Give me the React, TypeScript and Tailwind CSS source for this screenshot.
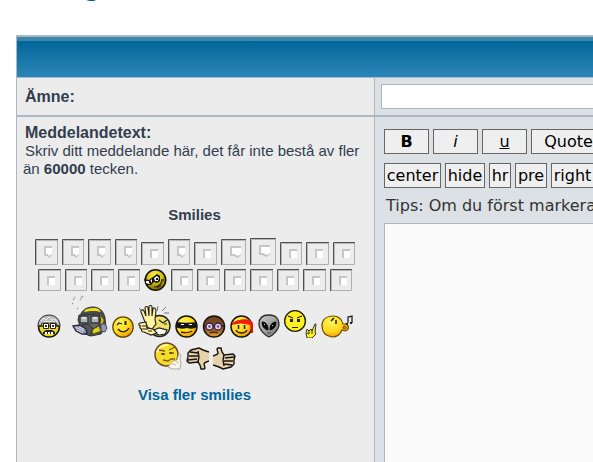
import React from 'react';

interface Smiley {
  width: number;
  height: number;
  label: string;
  art?: React.ReactNode;
}

const missing = (width: number, height: number): Smiley => ({ width, height, label: '' });

const Face = ({ x = 11.5, y = 11.5, r = 10.5, fill = 'url(#sun)' }: { x?: number; y?: number; r?: number; fill?: string }) => (
  <circle cx={x} cy={y} r={r} fill={fill} stroke="#16140a" strokeWidth="1.5" />
);

const sly: Smiley = {
  width: 23,
  height: 22,
  label: 'Sly',
  art: (
    <>
      <circle cx="11.5" cy="11" r="10.2" fill="url(#olive)" stroke="#16140a" strokeWidth="1.6" />
      <path d="M0 10 5 11 9 8 13 5 16 7 16 12 13 14 10 13 7 16 2 16Z" fill="#16140a" />
      <path d="M2 12 6 12 8 10 8 13 5 15 2 14ZM10 9 13 7 15 9 14 12 11 12Z" fill="#fff" />
      <path d="M12 9h2v2h-2zM5 12h2v2H5z" fill="#16140a" />
      <path d="M10 18c4 0 8-3 8-7M17 11l3 0M13 19l4-3" fill="none" stroke="#3b3200" strokeWidth="1.3" />
    </>
  ),
};

const grandpa: Smiley = {
  width: 24,
  height: 25,
  label: 'Grandpa',
  art: (
    <>
      <Face x={12} y={13.5} r={10.5} fill="#f0d81c" />
      <path d="M1 13C1 6 6 2 12 2s11 4 11 11l-3 0-1-3H5l-1 3Z" fill="#b9bbbd" stroke="#333" />
      <path d="M4 8l3-3 2 2 3-3 3 3 3-1 2 3M6 9l3-1 3 1 3-1 3 1" fill="none" stroke="#eee" />
      <path d="M2 13h20" stroke="#222" strokeWidth="1.4" />
      <path d="M6.5 10.5h5v5h-5zM13.500 10.500h5v5h-5z" fill="#fff" stroke="#222" />
      <path d="M8 12h2v2H8zM15 12h2v2h-2z" fill="#333" />
      <path d="M6 21v-2l3-2h6l3 2v2Z" fill="#222" />
      <path d="M8 19h2v2H8zM11 19h2v2h-2zM14 19h2v2h-2z" fill="#fff" />
    </>
  ),
};

const gasMask: Smiley = {
  width: 43,
  height: 43,
  label: 'Gas mask',
  art: (
    <>
      <path d="M8 4h1v1H8zM9 2h1v1H9zM15 4h1v1h-1zM17 1h1v1h-1zM16 2h1v1h-1zM7 8h1v1H7zM12 13h1v1h-1z" fill="#777" stroke="#aaa" strokeWidth=".5" />
      <path d="M15 22c1-7 7-10 13-10 7 0 11 5 12 11l1 9-5 7-10 2-9-5Z" fill="#4b4c4e" stroke="#333" />
      <path d="M19 16c3-3 7-3 11-3 3 0 5 2 6 4l-5-1-6 0-5 1Z" fill="#eee012" />
      <path d="M35 20l4 5-2 6-2-3ZM26 34l6-6 4 8-8 3Z" fill="#ddd016" stroke="#57530a" strokeWidth=".7" />
      <path d="M14 20l20-1 2 7-4 6-7 3-10-4-2-6Z" fill="#67696b" stroke="#333" />
      <path d="M15 21h8v7h-8zM26 21h8v7h-8z" fill="#aeb3b4" stroke="#36383a" strokeWidth="1.4" />
      <path d="M17 22h4v2h-4zM28 22h4v2h-4z" fill="#e0e3e3" />
      <path d="M17 30l7-1 4 5-3 7-7-3Z" fill="#535558" stroke="#303134" />
      <path d="M8 31l7-1 6 4 1 5-5 0-6-3Z" fill="#9297b4" stroke="#292a3e" strokeWidth="1.3" />
      <path d="M10 32l9 4M12 35l6 3M14 32l5 2" stroke="#d4d7ea" />
      <path d="M36 29l4 0 2 4-2 4-4-1Z" fill="#9297b4" stroke="#4a4b60" />
    </>
  ),
};

const wink: Smiley = {
  width: 22,
  height: 23,
  label: 'Wink',
  art: (
    <>
      <circle cx="11" cy="12" r="10.2" fill="url(#sun)" stroke="#5b4300" strokeWidth="1.2" />
      <path d="M13.500 6v4" stroke="#222" strokeWidth="2" />
      <path d="M5 10l2-2 3 1M6 14c3 4 8 4 11-1" fill="none" stroke="#222" strokeWidth="1.3" />
    </>
  ),
};

const applause: Smiley = {
  width: 33,
  height: 33,
  label: 'Applause',
  art: (
    <>
      <path d="M1 3l3 3M20 1l-1 5M28 2l-4 4M31 8h-5" stroke="#777" />
      <circle cx="21.500" cy="21" r="10.500" fill="#efe069" stroke="#222" strokeWidth="1.4" />
      <path d="M16 25l5-2 8 2-2 4-6 1-5-2Z" fill="#fff" stroke="#222" strokeWidth="1.2" />
      <path d="M21 15l4 3M29 15l-4 3M26 19h3" stroke="#222" strokeWidth="1.1" />
      <path d="M7 17 3 7c-1-2 2-3 3-1l2 5L7 3c0-2 3-2 3 0l1 8V2c0-2 3-2 3 0v9l1-7c0-2 3-1 3 1l-1 10 1 4-4 5-6-2Z" fill="#fff2a0" stroke="#222" strokeWidth="1.1" />
      <path d="M8 17 2 18c-2 1-1 3 1 3-2 1-1 3 1 3-1 2 0 3 2 3l7 3 6-2-4-4-6-1Z" fill="#fff2a0" stroke="#222" strokeWidth="1.2" />
      <path d="M4 21h6M5 24h5M10 26l4 0" stroke="#222" />
    </>
  ),
};

const bandit: Smiley = {
  width: 23,
  height: 23,
  label: 'Bandit',
  art: (
    <>
      <Face />
      <path d="M1 7c7 1 14 1 21 0v5c-3 2-7 2-10 1-4 1-8 1-11-1Z" fill="#171717" />
      <path d="M6 9h3v1H6zM14 9h3v1h-3z" fill="#fff" />
      <path d="M6 17c4 1 8 1 11-1" fill="none" stroke="#3a2500" strokeWidth="1.4" />
    </>
  ),
};

const goggles: Smiley = {
  width: 24,
  height: 23,
  label: 'Goggles',
  art: (
    <>
      <Face x={12} fill="url(#brown)" />
      <path d="M2 11h20" stroke="#302018" strokeWidth="1.5" />
      <circle cx="7.500" cy="11.500" r="3.500" fill="#e1d5ee" stroke="#392442" strokeWidth="1.3" />
      <circle cx="16" cy="11.500" r="3.500" fill="#e1d5ee" stroke="#392442" strokeWidth="1.3" />
      <circle cx="7.500" cy="11.500" r="1.300" fill="#6c4c82" />
      <circle cx="16" cy="11.500" r="1.300" fill="#6c4c82" />
      <path d="M8 18c2-1 6-1 8 0" fill="none" stroke="#33210c" strokeWidth="1.3" />
    </>
  ),
};

const bandana: Smiley = {
  width: 24,
  height: 23,
  label: 'Bandana',
  art: (
    <>
      <Face />
      <path d="M2 8c4-3 13-5 18-3l3 3v10h-2l-1-8c-6-2-12-2-18 0Z" fill="#ef1c10" />
      <path d="M22 11v6" stroke="#a80d08" />
      <path d="M8.500 10v4M14.500 10v4" stroke="#3a2100" strokeWidth="1.6" />
      <path d="M6 15c2 4 9 4 11 0" fill="none" stroke="#3a2100" strokeWidth="1.4" />
    </>
  ),
};

const alien: Smiley = {
  width: 22,
  height: 25,
  label: 'Alien',
  art: (
    <>
      <path d="M11 2c7 0 10 4 10 9 0 6-7 12-10 13C8 23 1 17 1 11c0-5 3-9 10-9Z" fill="url(#steel)" stroke="#292929" strokeWidth="1.3" />
      <path d="M4 9c4 0 6 3 6 8-4-1-6-4-6-8ZM18 9c-4 0-6 3-6 8 4-1 6-4 6-8Z" fill="#080808" stroke="#080808" />
      <path d="M6 11h1v1H6zM14 12h1v1h-1z" fill="#ccc" />
      <path d="M9 20h4" stroke="#444" />
    </>
  ),
};

const angry: Smiley = {
  width: 33,
  height: 28,
  label: 'Angry',
  art: (
    <>
      <circle cx="11" cy="11" r="10.400" fill="#fff21d" stroke="#26240a" strokeWidth="1.400" />
      <path d="M4 6l5 2M18 6l-5 2" stroke="#222" strokeWidth="1.200" />
      <path d="M6 9h3v3H6zM13 9h3v3h-3zM8 17h6v1H8z" fill="#222" />
      <path d="M23 28l-1-5 1-4 2 2 2-2 1 2 3-7 1 0-1 8 1 2-4 4Z" fill="#fff21d" stroke="#333" />
      <path d="M25 21l0 3M28 21l0 3M23 23l2 1" stroke="#333" />
    </>
  ),
};

const whistle: Smiley = {
  width: 32,
  height: 24,
  label: 'Whistle',
  art: (
    <>
      <path d="M12 2c6 0 9 4 10 8l2 0c4-1 5 7 0 7l-3-1c-2 5-5 7-10 7C5 22 1 18 1 12S5 2 12 2Z" fill="url(#sun)" stroke="#6b4c00" strokeWidth="1.2" />
      <path d="M10 7l3-3M15 6v4" stroke="#222" strokeWidth="1.500" />
      <circle cx="23.500" cy="13.500" r="1.500" fill="#d58a12" stroke="#7a4a00" />
      <path d="M27 9V3l4-1v7" fill="none" stroke="#222" strokeWidth="1.3" />
      <path d="M25 9h2v2h-2zM29 8h2v2h-2z" fill="#222" />
    </>
  ),
};

const thinking: Smiley = {
  width: 28,
  height: 28,
  label: 'Thinking',
  art: (
    <>
      <circle cx="12.500" cy="12.500" r="11.500" fill="#f2df28" stroke="#6b4434" strokeWidth="1.500" />
      <path d="M3 10C5 5 9 3 14 3" fill="none" stroke="#fff79d" strokeWidth="2" />
      <path d="M5 8l6 1M15 8l6-3M7 12h4M15 11h5M9 18l5 1 3-2 4 0" fill="none" stroke="#8a541c" strokeWidth="1.3" />
      <path d="M8 11h2v2H8zM16 10h2v2h-2z" fill="#5c4610" />
      <path d="M14 25l5-6 4-1 2-6 2 1-1 5 1 2-1 7H18Z" fill="#f7f5ee" stroke="#b1ab98" />
      <path d="M18 22l4 1M22 20l3 1" stroke="#c6bdab" />
    </>
  ),
};

const Hand = () => (
  <>
    <path d="M0 9 4 8 5 6V1l3 0 1 4 2 3 9-1 2 2-2 5v4l-4 2-6 2-10-4Z" fill="#e6d2ab" />
    <path d="M0 9 4 7.500 5 6 4 2 5 1h3l1 4 2 3 9-1 2 2-1 4v4l-3 3-8 2-4-2-6-2" fill="none" stroke="#17130e" strokeWidth="1.400" />
    <path d="M11 8 10 13M12 11l9-1M11 14l9 0M11 17l8 1M10 13l1 6" fill="none" stroke="#17130e" strokeWidth="1.400" />
  </>
);

const thumbDown: Smiley = {
  width: 23,
  height: 23,
  label: 'Thumb down',
  art: (
    <g transform="rotate(180 11.5 11.5)">
      <Hand />
    </g>
  ),
};

const thumbUp: Smiley = { width: 23, height: 23, label: 'Thumb up', art: <Hand /> };

const firstRow: Smiley[] = [
  missing(23, 26), missing(22, 26), missing(23, 26), missing(22, 26), missing(23, 23), missing(22, 26),
  missing(23, 23), missing(25, 26), missing(26, 27), missing(22, 23), missing(23, 23), missing(22, 23),
];

const secondRow: Smiley[] = [
  missing(23, 22), missing(22, 22), missing(23, 22), missing(22, 22), sly, missing(22, 22),
  missing(23, 22), missing(22, 22), missing(23, 22), missing(22, 22), missing(23, 22), missing(22, 22),
];

const thirdRow = [grandpa, gasMask, wink, applause, bandit, goggles, bandana, alien, angry, whistle];
const fourthRow = [thinking, thumbDown, thumbUp];

// Inset frame with a clipped page icon, drawn for smilies without artwork
const MissingArt = ({ width, height }: Smiley) => {
  const wide = width > 23 ? 11 : 8;
  const tall = height > 23;
  return (
    <>
      <path d={`M${width - 0.5} 0V${height - 0.5}H0`} fill="none" stroke="#aeaeae" />
      <path d={`M.5 ${height}V.5H${width}`} fill="none" stroke="#505050" />
      <path d={`M1.5 ${height - 1}V1.5H${width - 1}`} fill="none" stroke="#b8b8b8" />
      <g transform="translate(9 7)">
        <path d={tall ? `M0 0H${wide}V9L${wide - 3} 12 3 10H0Z` : `M0 0H${wide}V9H0Z`} fill="#c6c6c6" />
        <path d={tall ? `M2 2H${wide}V8L${wide - 3} 10 4 8H2Z` : `M2 2H${wide}V9H2Z`} fill="#fff" />
      </g>
    </>
  );
};

const SmileyRow = ({ items }: { items: Smiley[] }) => (
  <div className="flex items-end justify-center gap-1">
    {items.map((item, i) => (
      <a key={i} href="#smilies" aria-label={item.label || 'Smiley'} className="shrink-0">
        <svg width={item.width} height={item.height} viewBox={`0 0 ${item.width} ${item.height}`} className="block">
          {item.art ?? <MissingArt {...item} />}
        </svg>
      </a>
    ))}
  </div>
);

const Gradients = () => (
  <svg width="0" height="0" className="absolute" aria-hidden="true">
    <defs>
      <radialGradient id="sun" cx=".35" cy=".3" r=".8">
        <stop offset="0" stopColor="#fff45a" />
        <stop offset=".55" stopColor="#ffd91c" />
        <stop offset="1" stopColor="#ee8b00" />
      </radialGradient>
      <radialGradient id="olive" cx=".45" cy=".25" r=".8">
        <stop offset="0" stopColor="#f8ee45" />
        <stop offset=".5" stopColor="#d2bd0b" />
        <stop offset="1" stopColor="#665700" />
      </radialGradient>
      <linearGradient id="brown" x2="0" y2="1">
        <stop offset="0" stopColor="#6e3e22" />
        <stop offset=".6" stopColor="#93552a" />
        <stop offset="1" stopColor="#e7a32c" />
      </linearGradient>
      <linearGradient id="steel" x2="1" y2="1">
        <stop offset="0" stopColor="#ccc" />
        <stop offset="1" stopColor="#777" />
      </linearGradient>
    </defs>
  </svg>
);

const buttonStyle = 'h-[25px] shrink-0 border border-[#666] bg-[#efefef] text-center text-black whitespace-nowrap leading-5';

export default function App() {
  return (
    <div className="flex h-screen flex-col overflow-hidden bg-white font-['Liberation_Sans',Arial,sans-serif] text-[#323d4f]">
      <Gradients />
      <h1 className="flex h-[35px] shrink-0 items-start overflow-hidden pl-[84px] font-['DejaVu_Sans',sans-serif] text-2xl font-bold text-[#00598c]">
        <span className="-mt-7">g</span>
      </h1>

      <form className="ml-4 flex flex-1 flex-col border-t-2 border-l border-[#a9b8c2]">
        <div className="h-10 shrink-0 border-t-4 border-[#3d87ae] bg-linear-to-b from-[#006699] to-[#2a86b8]" />

        <div className="flex h-10 shrink-0 border-t border-b-2 border-[#a9b8c2]">
          <div className="flex w-[358px] shrink-0 items-center border-r border-[#a9b8c2] bg-[#ececec] pl-2">
            <label htmlFor="subject" className="text-base font-bold">Ämne:</label>
          </div>
          <div className="flex flex-1 items-center overflow-hidden bg-[#dce1e5] pl-1.5">
            <input id="subject" type="text" className="h-[25px] w-[450px] shrink-0 border border-[#a9b8c2] bg-white px-1" />
          </div>
        </div>

        <div className="flex flex-1">
          <div className="w-[358px] shrink-0 border-r border-[#a9b8c2] bg-[#ececec] pt-[7px] pr-2 pl-1.5 text-[15px] leading-[18px]">
            <label htmlFor="message" className="block pl-0.5 text-base leading-[18px] font-bold">Meddelandetext:</label>
            <p className="indent-0.5">
              Skriv ditt meddelande här, det får inte bestå av fler än <b>60000</b> tecken.
            </p>

            <h2 className="mt-7 text-center font-bold">Smilies</h2>
            <div id="smilies" className="mt-3.5 flex flex-col gap-1">
              <SmileyRow items={firstRow} />
              <SmileyRow items={secondRow} />
              <SmileyRow items={thirdRow} />
              <SmileyRow items={fourthRow} />
            </div>
            <p className="mt-4 text-center">
              <a href="#smilies" className="font-bold text-[#006699]">Visa fler smilies</a>
            </p>
          </div>

          <div className="flex flex-1 flex-col overflow-hidden bg-[#dce1e5] pt-3 pl-[9px] font-['DejaVu_Sans',sans-serif] text-base">
            <div className="flex gap-1">
              <button type="button" className={`${buttonStyle} w-[45px] font-bold`}>B</button>
              <button type="button" className={`${buttonStyle} w-[45px] italic`}>i</button>
              <button type="button" className={`${buttonStyle} w-[45px] underline`}>u</button>
              <button type="button" className={`${buttonStyle} w-[75px]`}>Quote</button>
            </div>
            <div className="mt-[9px] flex gap-1">
              <button type="button" className={`${buttonStyle} w-[57px]`}>center</button>
              <button type="button" className={`${buttonStyle} w-10`}>hide</button>
              <button type="button" className={`${buttonStyle} w-[22px]`}>hr</button>
              <button type="button" className={`${buttonStyle} w-8`}>pre</button>
              <button type="button" className={`${buttonStyle} w-[43px]`}>right</button>
            </div>
            <p className="mt-1 pt-1 pl-0.5 leading-5 whitespace-nowrap text-[#333]">Tips: Om du först markerar</p>
            <textarea id="message" className="-mb-px mt-[7px] w-[500px] flex-1 resize-none border border-[#a9b8c2] bg-[#fafafa] p-1" />
          </div>
        </div>
      </form>
    </div>
  );
}
